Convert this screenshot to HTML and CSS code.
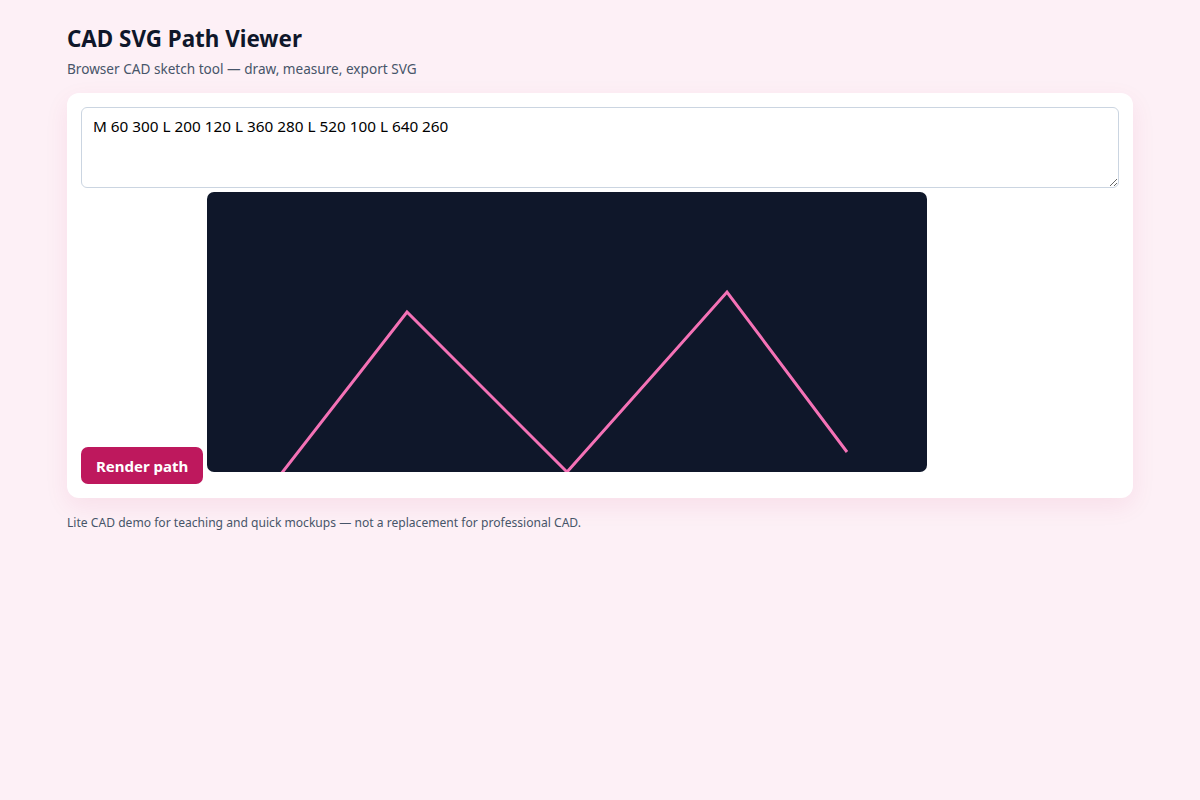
FILE: index.html
```html
<!DOCTYPE html>
<html lang="en">
<head>
<meta charset="utf-8">
<title>CAD SVG Path Viewer</title>
<link rel="stylesheet" href="styles.css">
</head>
<body>
<main class="wrap">
  <h1 class="title">CAD SVG Path Viewer</h1>
  <p class="subtitle">Browser CAD sketch tool — draw, measure, export SVG</p>
  <section class="card">
    <textarea class="path-input">M 60 300 L 200 120 L 360 280 L 520 100 L 640 260</textarea>
    <button class="render-btn" type="button">Render path</button>
    <svg class="canvas" width="720" height="280" viewBox="0 0 720 280" xmlns="http://www.w3.org/2000/svg">
      <path d="M 60 300 L 200 120 L 360 280 L 520 100 L 640 260" fill="none" stroke="#f472b6" stroke-width="3"/>
    </svg>
  </section>
  <p class="note">Lite CAD demo for teaching and quick mockups — not a replacement for professional CAD.</p>
</main>
</body>
</html>
```

FILE: styles.css
```css
html, body {
  margin: 0;
  padding: 0;
}
body {
  background: #fdf0f6;
  font-family: "Noto Sans", "Open Sans", sans-serif;
  color: #0f172a;
}
.wrap {
  width: 1066px;
  margin: 0 auto;
  padding-top: 25px;
}
.title {
  margin: 0;
  font-size: 22.4px;
  line-height: 28px;
  font-weight: 700;
  color: #0f172a;
}
.subtitle {
  margin: 7px 0 15px;
  font-size: 13.6px;
  line-height: 18px;
  color: #475569;
}
.card {
  background: #ffffff;
  border-radius: 12px;
  padding: 14px;
  box-shadow: 0 8px 24px rgba(190, 24, 93, 0.08);
}
.path-input {
  display: block;
  box-sizing: border-box;
  width: 100%;
  height: 81px;
  margin: 0 0 4px;
  padding: 8px 11px;
  border: 1px solid #cbd5e1;
  border-radius: 6px;
  font-family: inherit;
  font-size: 15.3px;
  line-height: 20px;
  color: #000;
}
.render-btn {
  background: #be185d;
  color: #ffffff;
  border: none;
  border-radius: 7px;
  padding: 9px 15px 7px;
  font-family: inherit;
  font-size: 15px;
  font-weight: 700;
  line-height: 21px;
}
.canvas {
  background: #0f172a;
  border-radius: 7px;
}
.note {
  margin: 16px 0 0;
  font-size: 12.1px;
  line-height: 17px;
  color: #475569;
}
```
